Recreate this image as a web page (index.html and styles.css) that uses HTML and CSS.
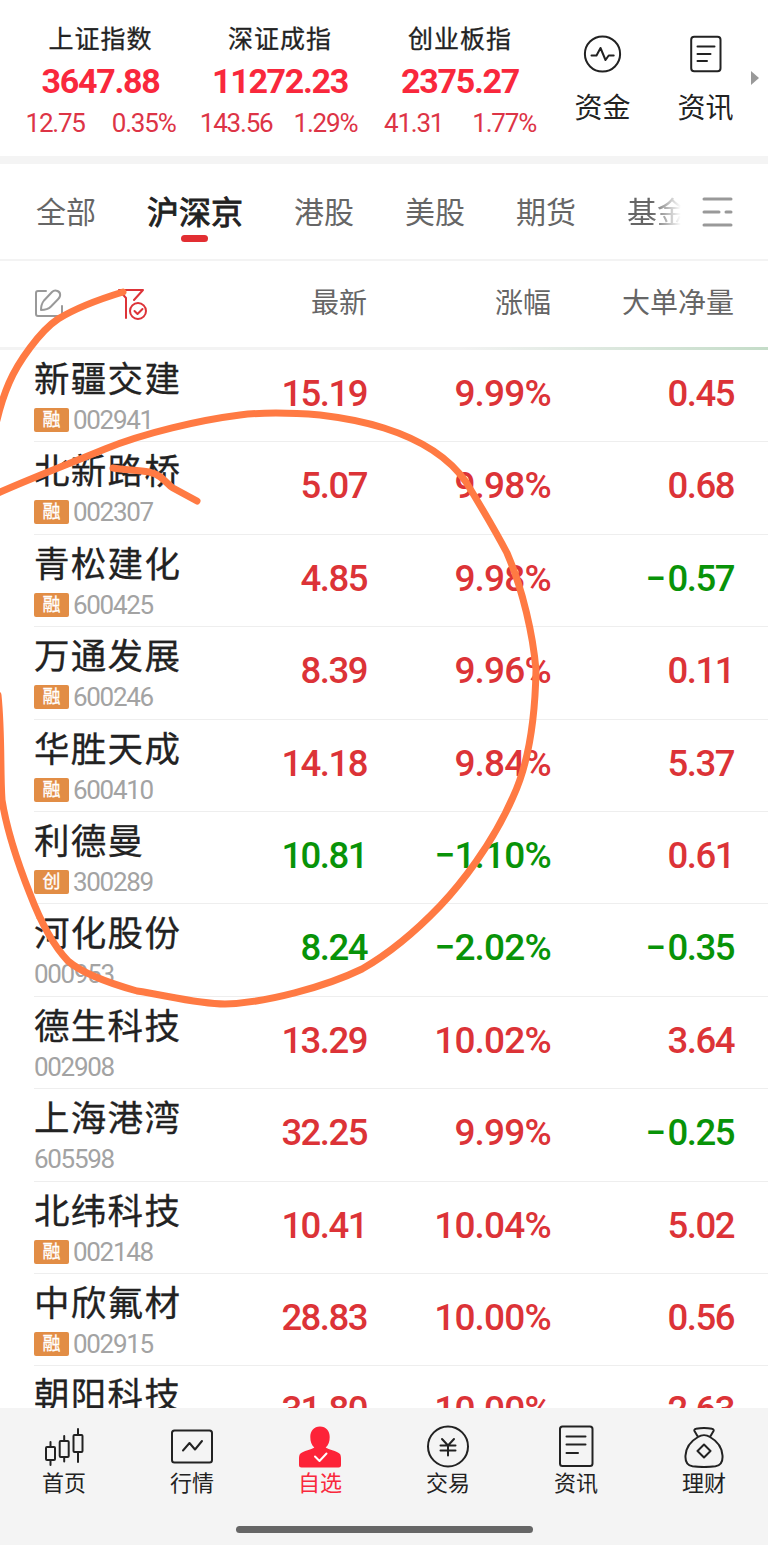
FILE: index.html
```
<!DOCTYPE html>
<html lang="zh-CN">
<head>
  <meta charset="UTF-8">
  <title>自选</title>
  <link rel="stylesheet" href="styles.css">
</head>
<body>
  <div class="app">
    <header class="indices">
      <div class="index index-sh">
        <div class="index-name">上证指数</div>
        <div class="index-value">3647.88</div>
        <div class="index-change"><span>12.75</span><span>0.35%</span></div>
      </div>
      <div class="index index-sz">
        <div class="index-name">深证成指</div>
        <div class="index-value">11272.23</div>
        <div class="index-change"><span>143.56</span><span>1.29%</span></div>
      </div>
      <div class="index index-cy">
        <div class="index-name">创业板指</div>
        <div class="index-value">2375.27</div>
        <div class="index-change"><span>41.31</span><span>1.77%</span></div>
      </div>
      <div class="shortcut">
        <svg width="40" height="40" viewBox="0 0 40 40"><circle cx="19.500" cy="20" r="17.6"/><path d="M8.500 21.500h5l4-7.500 5 12 3.200-4.500h5"/></svg>
        <span>资金</span>
      </div>
      <div class="shortcut">
        <svg width="40" height="40" viewBox="0 0 40 40"><rect x="5.200" y="2.700" width="29.300" height="34.600" rx="3"/><path d="M11.500 12.500h17M11.500 20h13M11.500 27h9.500"/></svg>
        <span>资讯</span>
      </div>
      <div class="arrow"></div>
    </header>

    <nav class="tabs">
      <span class="tab">全部</span>
      <span class="tab active">沪深京</span>
      <span class="tab">港股</span>
      <span class="tab">美股</span>
      <span class="tab">期货</span>
      <span class="tab fade">基金</span>
      <svg class="tabs-menu" width="32" height="32" viewBox="0 0 32 32"><path d="M3 3h27M3 16h15M25 16h5M3 29h27"/></svg>
    </nav>

    <div class="table-head">
      <div class="tools">
        <svg class="edit" width="30" height="30" viewBox="0 0 30 30"><path d="M12 2H4a2 2 0 0 0-2 2v21a2 2 0 0 0 2 2h22a2 2 0 0 0 2-2v-8M7 21c0-4 1-7 3-9.500l8-8.500c3-3 9-1 8 4-.3 1.500-1 2.300-2 3.300l-7 7.200c-2.500 2.500-5.500 3.500-10 3.500z"/></svg>
        <svg class="filter" width="30" height="32" viewBox="0 0 30 32"><path d="M1 2h24l-9 10M1 2l7 8v20"/><circle cx="20" cy="23" r="8"/><path d="M16.500 23l3 3 5-5"/></svg>
      </div>
      <div>最新</div>
      <div>涨幅</div>
      <div>大单净量</div>
    </div>

    <main class="list">
      <div class="row">
        <div class="stock"><div class="name">新疆交建</div><div class="code"><i class="tag">融</i>002941</div></div>
        <div class="num up">15.19</div><div class="num rate up">9.99%</div><div class="num up">0.45</div>
      </div>
      <div class="row">
        <div class="stock"><div class="name">北新路桥</div><div class="code"><i class="tag">融</i>002307</div></div>
        <div class="num up">5.07</div><div class="num rate up">9.98%</div><div class="num up">0.68</div>
      </div>
      <div class="row">
        <div class="stock"><div class="name">青松建化</div><div class="code"><i class="tag">融</i>600425</div></div>
        <div class="num up">4.85</div><div class="num rate up">9.98%</div><div class="num down"><span class="minus">−</span>0.57</div>
      </div>
      <div class="row">
        <div class="stock"><div class="name">万通发展</div><div class="code"><i class="tag">融</i>600246</div></div>
        <div class="num up">8.39</div><div class="num rate up">9.96%</div><div class="num up">0.11</div>
      </div>
      <div class="row">
        <div class="stock"><div class="name">华胜天成</div><div class="code"><i class="tag">融</i>600410</div></div>
        <div class="num up">14.18</div><div class="num rate up">9.84%</div><div class="num up">5.37</div>
      </div>
      <div class="row">
        <div class="stock"><div class="name">利德曼</div><div class="code"><i class="tag">创</i>300289</div></div>
        <div class="num down">10.81</div><div class="num rate down">−1.10%</div><div class="num up">0.61</div>
      </div>
      <div class="row">
        <div class="stock"><div class="name">河化股份</div><div class="code">000953</div></div>
        <div class="num down">8.24</div><div class="num rate down">−2.02%</div><div class="num down"><span class="minus">−</span>0.35</div>
      </div>
      <div class="row">
        <div class="stock"><div class="name">德生科技</div><div class="code">002908</div></div>
        <div class="num up">13.29</div><div class="num rate up">10.02%</div><div class="num up">3.64</div>
      </div>
      <div class="row">
        <div class="stock"><div class="name">上海港湾</div><div class="code">605598</div></div>
        <div class="num up">32.25</div><div class="num rate up">9.99%</div><div class="num down"><span class="minus">−</span>0.25</div>
      </div>
      <div class="row">
        <div class="stock"><div class="name">北纬科技</div><div class="code"><i class="tag">融</i>002148</div></div>
        <div class="num up">10.41</div><div class="num rate up">10.04%</div><div class="num up">5.02</div>
      </div>
      <div class="row">
        <div class="stock"><div class="name">中欣氟材</div><div class="code"><i class="tag">融</i>002915</div></div>
        <div class="num up">28.83</div><div class="num rate up">10.00%</div><div class="num up">0.56</div>
      </div>
      <div class="row">
        <div class="stock"><div class="name">朝阳科技</div></div>
        <div class="num up">31.80</div><div class="num rate up">10.00%</div><div class="num up">2.63</div>
      </div>
    </main>

    <footer class="bottom">
      <div class="menu">
        <div class="item">
          <svg width="44" height="44" viewBox="0 0 44 44"><path d="M8.500 18v5M8.500 36v5M22.200 12v5M22.200 33v4.500M36 5v6M36 28v10"/><rect x="4" y="23" width="9" height="13" rx="1"/><rect x="17.700" y="17" width="9" height="16" rx="1"/><rect x="31.500" y="11" width="9" height="17" rx="1"/></svg>
          <span>首页</span>
        </div>
        <div class="item">
          <svg width="44" height="44" viewBox="0 0 44 44"><rect x="2" y="6.500" width="40" height="32" rx="2.500"/><path d="M13 26.500l6.500-7.500 5.500 6.500 7-8.500"/></svg>
          <span>行情</span>
        </div>
        <div class="item on">
          <svg width="44" height="44" viewBox="0 0 44 44"><path class="solid" d="M22 2.500c6 0 9.700 4.500 9.700 10.500 0 4.500-1.200 8-4 10.500 1 1.500 12 3.500 14.300 6.500.8 1.200 1 3 1 5v6a2.500 2.500 0 0 1-2.500 2.500h-37A2.500 2.500 0 0 1 1 41v-6c0-2 .2-3.800 1-5 2.300-3 13.300-5 14.300-6.500-2.800-2.500-4-6-4-10.500 0-6 3.700-10.500 9.700-10.500z"/><path class="tick" d="M17 32.500l4.500 4.500 7-7.500"/></svg>
          <span>自选</span>
        </div>
        <div class="item">
          <svg width="44" height="44" viewBox="0 0 44 44"><circle cx="22" cy="22.500" r="20"/><path d="M16 15l6 6.500 6-6.500M14.500 21.500h15M14.500 26.500h15M22 21.500v10"/></svg>
          <span>交易</span>
        </div>
        <div class="item">
          <svg width="44" height="44" viewBox="0 0 44 44"><rect x="6" y="2.500" width="32.500" height="39.500" rx="2.500"/><path d="M12.500 12.500h19M12.500 20.500h19M12.500 29h11.500"/></svg>
          <span>资讯</span>
        </div>
        <div class="item">
          <svg width="44" height="44" viewBox="0 0 44 44"><path d="M16 13l-3.500-6c-.5-1.200.2-2 1.500-2.200 5-1 11-1 16 0 1.300.2 2 1 1.500 2.200L28 13M16 13c3.500-2.300 8.500-2.300 12 0 7 4 12 11 12.500 18.500.5 7-2 10-7 10.800-8 1-15 1-23 0-5-.8-7.500-3.800-7-10.800C4 24 9 17 16 13zM22 20.500l6.500 6.500-6.500 6.500-6.500-6.500z"/></svg>
          <span>理财</span>
        </div>
      </div>
      <div class="home-bar"></div>
    </footer>

    <!-- hand-drawn marker -->
    <svg class="marker" width="768" height="1546" viewBox="0 0 768 1546">
      <path d="M123 292C100 299 76 308 58 319C40 331 18 362 9 383C3 397 0 407-3 420"/>
      <path d="M-4 494C22 482 66 465 105 449S200 420 240 415C265 412 295 413 320 415C345 418 365 422 384 428C425 441 450 459 466 482C480 505 495 530 507 553C523 590 533 635 536 670C535 725 528 765 513 797C492 845 460 885 440 906C415 932 390 953 362 969C325 987 265 1003 225 1004C197 1004 165 995 137 991C112 984 82 973 68 961C50 942 38 915 30 894C17 861 7 832 2 800C0 770 2 735-2 695"/>
      <path d="M113 468C125 470 138 470 149 472C163 475 166 484 173 488L197 501"/>
    </svg>
  </div>
</body>
</html>
```
FILE: styles.css
```
body {
  margin: 0;
  background: #fff;
  font-family: Roboto, "Noto Sans CJK SC", sans-serif;
  color: #222;
}
svg {
  fill: none;
  stroke: #222;
  stroke-width: 2;
  stroke-linecap: round;
  stroke-linejoin: round;
}
.app {
  position: relative;
  width: 768px;
  height: 1546px;
  overflow: hidden;
  display: flex;
  flex-direction: column;
}

/* indices */
.indices {
  display: flex;
  height: 156px;
  flex: none;
  border-bottom: 8px solid #f4f4f4;
}
.index {
  text-align: center;
  padding-top: 23px;
}
.index-sh {
  width: 201px;
}
.index-sz {
  width: 158px;
}
.index-cy {
  width: 202px;
}
.index-name {
  font-size: 25px;
  line-height: 34px;
  letter-spacing: 1px;
  -webkit-text-stroke: 0.3px;
}
.index-value {
  font-size: 34px;
  line-height: 49px;
  font-weight: 700;
  letter-spacing: -1.3px;
  color: #f9283c;
}
.index-change {
  display: flex;
  justify-content: center;
  gap: 27px;
  font-size: 26px;
  line-height: 34px;
  letter-spacing: -1.2px;
  color: #dd3446;
}
.index-sz .index-change {
  gap: 21px;
  padding-right: 3px;
}
.index-cy .index-change {
  gap: 29px;
}
.shortcut {
  width: 103px;
  padding-top: 34px;
  text-align: center;
  font-size: 28px;
}
.shortcut:nth-child(4) {
  margin-left: -10px;
}
.shortcut svg {
  display: block;
  margin: 0 auto 15px;
}
.shortcut span {
  display: block;
  line-height: 40px;
}
.arrow {
  margin: 71px 0 0 -6px;
  width: 0;
  height: 0;
  border-left: 8px solid #999;
  border-top: 7px solid transparent;
  border-bottom: 7px solid transparent;
}

/* tabs */
.tabs {
  display: flex;
  align-items: center;
  height: 95px;
  flex: none;
  padding-left: 36px;
  font-size: 30px;
  line-height: 44px;
  color: #666;
  border-bottom: 2px solid #f3f3f3;
}
.tab {
  margin: 3px 51px 0 0;
  white-space: nowrap;
}
.tab.active {
  position: relative;
  color: #222;
  font-size: 32px;
  -webkit-text-stroke: 0.9px;
}
.tab.active::after {
  content: "";
  position: absolute;
  left: 34px;
  bottom: -7px;
  width: 27px;
  height: 7px;
  border-radius: 4px;
  background: #e22e32;
}
.tab.fade {
  width: 54px;
  overflow: hidden;
  margin-right: 20px;
  -webkit-mask-image: linear-gradient(to right, #000 45%, transparent);
  mask-image: linear-gradient(to right, #000 45%, transparent);
}
.tabs-menu {
  stroke: #999;
  stroke-width: 3;
}

/* table */
.table-head, .row {
  display: grid;
  grid-template-columns: 150px 183px 184px 183px;
  text-align: right;
}
.table-head {
  flex: none;
  height: 86px;
  padding-left: 34px;
  align-items: center;
  font-size: 28px;
  line-height: 44px;
  color: #666;
  border-bottom: 3px solid;
  border-image: linear-gradient(to right, #f3f3f3 60%, #c4dcc8) 1;
}
.tools {
  display: flex;
  align-items: center;
}
.edit {
  stroke: #999;
  margin-right: 54px;
}
.filter {
  stroke: #dd3338;
}
.list {
  flex: 1;
  overflow: hidden;
}
.row {
  height: 92.4px;
  margin-left: 34px;
  box-sizing: border-box;
  border-bottom: 1px solid #eee;
}
.stock {
  text-align: left;
  padding-top: 8px;
}
.name {
  font-size: 35.5px;
  line-height: 44px;
  letter-spacing: 1.3px;
  white-space: nowrap;
  -webkit-text-stroke: 0.3px;
}
.code {
  display: flex;
  align-items: center;
  height: 36px;
  font-size: 26px;
  letter-spacing: -1.3px;
  color: #a3a3a3;
}
.tag {
  width: 35px;
  height: 24px;
  margin-right: 4px;
  border-radius: 2px;
  background: #e28d45;
  color: #fff;
  font-size: 18px;
  line-height: 24px;
  font-style: normal;
  letter-spacing: 0;
  text-align: center;
  -webkit-text-stroke: 0.3px;
}
.num {
  font-size: 36.5px;
  line-height: 87px;
  font-weight: 500;
  letter-spacing: -1.5px;
}
.rate {
  font-size: 37px;
  letter-spacing: -0.8px;
}
.minus {
  margin-right: 3px;
}
.up {
  color: #dc3337;
}
.down {
  color: #089308;
}

/* bottom menu */
.bottom {
  flex: none;
  height: 137px;
  margin-bottom: 1px;
  background: #f4f4f4;
}
.menu {
  display: flex;
}
.item {
  width: 128px;
  padding-top: 16px;
  text-align: center;
  font-size: 22px;
}
.item svg {
  display: block;
  margin: 0 auto;
}
.item span {
  display: block;
  line-height: 31px;
}
.item.on {
  color: #f9283c;
}
.solid {
  fill: #fd2338;
  stroke: none;
}
.tick {
  stroke: #fff;
}
.home-bar {
  width: 297px;
  height: 7px;
  margin: 27px auto 0;
  border-radius: 4px;
  background: #666;
}

.marker {
  position: absolute;
  left: 0;
  top: 0;
  stroke: #ff7a43;
  stroke-width: 7;
  pointer-events: none;
}
```
